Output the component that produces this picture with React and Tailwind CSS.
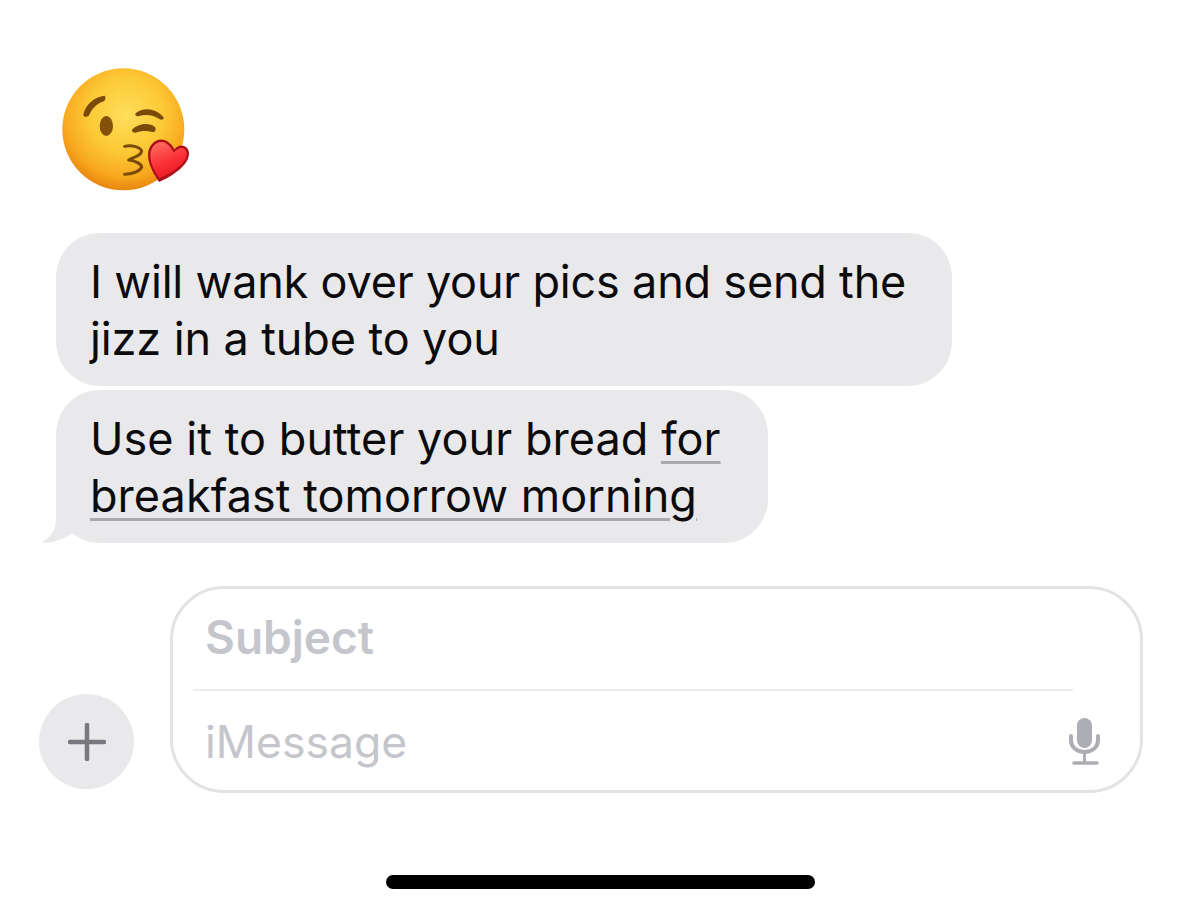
const font = { fontFamily: '"Inter", "Liberation Sans", sans-serif' };

function Emoji() {
  return (
    <svg width="170" height="150" viewBox="0 0 510 450" className="block">
      <defs>
        <radialGradient id="face" cx="0.52" cy="0.38" r="0.62">
          <stop offset="0" stopColor="#fede5c" />
          <stop offset="0.5" stopColor="#fcc935" />
          <stop offset="0.82" stopColor="#f8a81e" />
          <stop offset="1" stopColor="#e8860f" />
        </radialGradient>
        <linearGradient id="heart" x1="0.3" y1="0" x2="0.7" y2="1">
          <stop offset="0" stopColor="#ff6a5c" />
          <stop offset="0.5" stopColor="#fb3238" />
          <stop offset="1" stopColor="#e8141f" />
        </linearGradient>
      </defs>
      <circle cx="250" cy="238" r="183" fill="url(#face)" />
      <path d="M130 194C136 164 163 140 194 137C199 144 196 152 188 155C170 161 156 175 148 194C142 202 131 202 130 194Z" fill="#7a4a08" />
      <ellipse cx="199" cy="228" rx="20" ry="30" fill="#84500a" />
      <path d="M287 190C310 170 348 174 371 202C372 210 364 211 358 207C340 195 316 191 295 199C287 200 284 194 287 190Z" fill="#7a4a08" />
      <path d="M277 238C295 220 328 216 345 231C350 240 345 248 336 246C320 241 301 243 287 248C278 249 274 243 277 238Z" fill="#7a4a08" />
      <path d="M254 289C274 284 298 290 305 303C305 316 280 322 266 330C285 332 305 342 305 352C298 365 275 373 254 373" fill="none" stroke="#7a4a08" strokeWidth="9" strokeLinecap="round" strokeLinejoin="round" />
      <path d="M357 396C344 376 324 345 324 315C324 284 350 262 373 270C391 276 399 290 403 298C413 287 430 281 442 295C452 308 446 329 434 343C417 364 386 384 357 396Z" fill="#ab0f18" />
      <path d="M358 384C346 368 331 342 331 315C331 290 352 271 371 277C388 283 395 297 401 308C412 296 426 289 436 299C445 310 439 327 428 339C412 358 384 375 358 384Z" fill="url(#heart)" />
    </svg>
  );
}

function Mic() {
  return (
    <svg width="32" height="48" viewBox="0 0 32 48" className="block" fill="none">
      <rect x="9" y="0" width="15" height="30" rx="7.5" fill="#adaeb3" />
      <path d="M3 18V22C3 29.5 9 34 16.5 34C24 34 30 29.5 30 22V18" stroke="#adaeb3" strokeWidth="4" strokeLinecap="round" />
      <path d="M16.5 34V44" stroke="#adaeb3" strokeWidth="3" />
      <path d="M6 45H29" stroke="#adaeb3" strokeWidth="3.5" strokeLinecap="round" />
    </svg>
  );
}

const link = "underline decoration-[#a9a9ae] decoration-[length:3px] underline-offset-[6px]";

export default function App() {
  return (
    <div className="w-[1200px] h-[911px] bg-white overflow-hidden pt-[50px] flex flex-col" style={font}>
      <div className="ml-[40px] h-[150px]">
        <Emoji />
      </div>

      <div className="mt-[33px] ml-[56px] flex flex-col items-start gap-1 text-[45px] leading-[56.5px] text-[#0b0b0d] tracking-[-0.2px]">
        <div className="w-[896px] h-[153px] rounded-[44px] bg-[#e9e9eb] pl-[34px] pt-[21px]">
          I will wank over your pics and send the
          <br />
          <span className="tracking-[-0.1px]">jizz in a tube to you</span>
        </div>
        <div className="relative w-[712px] h-[153px] rounded-[44px] bg-[#e9e9eb] pl-[34px] pt-[21px] tracking-[0.05px]">
          <svg className="absolute left-[-15px] bottom-0" width="50" height="50" viewBox="0 0 50 50">
            <path d="M15 0L15 26C15 36 10 45 0 49.5C12 50.5 24 46 31 40L50 20V0Z" fill="#e9e9eb" />
          </svg>
          <span className="relative">
            Use it to butter your bread <span className={link}>for</span>
            <br />
            <span className={link}>breakfast tomorrow morning</span>
          </span>
        </div>
      </div>

      <div className="mt-[43px] flex items-end pl-[39px]">
        <div className="w-[95px] h-[95px] mb-[4px] rounded-full bg-[#e9e9eb] flex items-center justify-center">
          <svg width="38" height="38" viewBox="0 0 38 38" fill="none">
            <path d="M19 2V36M2 19H36" stroke="#78787e" strokeWidth="4.5" strokeLinecap="round" />
          </svg>
        </div>
        <div className="ml-[36px] w-[973px] h-[207px] rounded-[54px] border-[3px] border-[#e3e3e5] flex flex-col">
          <div className="h-[100px] pl-[32px] pb-[4px] flex items-center text-[46px] font-semibold text-[#c5c6cb]">
            Subject
          </div>
          <div className="ml-[20px] w-[880px] h-[2px] bg-[#ededef]" />
          <div className="flex-1 pl-[32px] pr-[40px] flex items-center justify-between text-[44.5px] text-[#c5c6cb]">
            <span className="mt-[4px]">iMessage</span>
            <span className="mt-[2px]">
              <Mic />
            </span>
          </div>
        </div>
      </div>

      <div className="mt-[82px] ml-[386px] w-[429px] h-[14px] rounded-full bg-black" />
    </div>
  );
}
